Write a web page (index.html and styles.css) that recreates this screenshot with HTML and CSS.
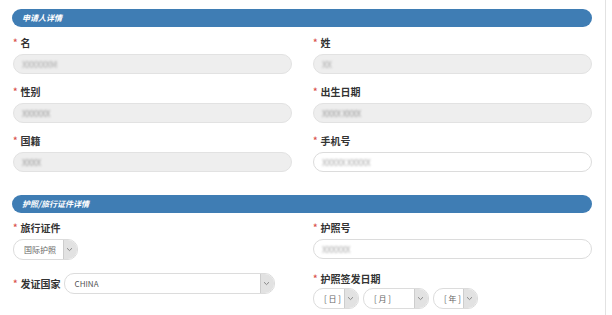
FILE: index.html
```html
<!DOCTYPE html>
<html lang="zh-CN">
<head>
    <meta charset="UTF-8">
    <meta name="viewport" content="width=device-width, initial-scale=1.0">
    <title>申请人详情</title>
    <link rel="stylesheet" href="styles.css">
</head>
<body>
    <div id="page">

        <!-- Applicant details -->
        <div class="section-bar">申请人详情</div>
        <div class="grid">
            <div class="field">
                <label><span class="req">*</span>名</label>
                <div class="input readonly"><span class="blur">XXXXXXM</span></div>
            </div>
            <div class="field">
                <label><span class="req">*</span>姓</label>
                <div class="input readonly"><span class="blur">XX</span></div>
            </div>
            <div class="field">
                <label><span class="req">*</span>性别</label>
                <div class="input readonly"><span class="blur dark">XXXXXX</span></div>
            </div>
            <div class="field">
                <label><span class="req">*</span>出生日期</label>
                <div class="input readonly"><span class="blur dark">XXXX XXXX</span></div>
            </div>
            <div class="field">
                <label><span class="req">*</span>国籍</label>
                <div class="input readonly"><span class="blur dark">XXXX</span></div>
            </div>
            <div class="field">
                <label><span class="req">*</span>手机号</label>
                <div class="input"><span class="blur">XXXXX XXXXX</span></div>
            </div>
        </div>

        <!-- Passport details -->
        <div class="section-bar second">护照/旅行证件详情</div>
        <div class="grid tight">
            <div class="field">
                <label><span class="req">*</span>旅行证件</label>
                <div class="select small">
                    <span class="value">国际护照</span>
                    <span class="arrow"><svg width="7" height="5" viewBox="0 0 7 5"><path d="M1 1.2 L3.5 3.6 L6 1.2" fill="none" stroke="#888" stroke-width="1"/></svg></span>
                </div>
            </div>
            <div class="field">
                <label><span class="req">*</span>护照号</label>
                <div class="input"><span class="blur">XXXXXX</span></div>
            </div>
            <div class="field inline">
                <label><span class="req">*</span>发证国家</label>
                <div class="select country">
                    <span class="value">CHINA</span>
                    <span class="arrow"><svg width="7" height="5" viewBox="0 0 7 5"><path d="M1 1.2 L3.5 3.6 L6 1.2" fill="none" stroke="#888" stroke-width="1"/></svg></span>
                </div>
            </div>
            <div class="field">
                <label><span class="req">*</span>护照签发日期</label>
                <div class="date-row">
                    <div class="select day">
                        <span class="value">[ 日 ]</span>
                        <span class="arrow"><svg width="7" height="5" viewBox="0 0 7 5"><path d="M1 1.2 L3.5 3.6 L6 1.2" fill="none" stroke="#888" stroke-width="1"/></svg></span>
                    </div>
                    <div class="select month">
                        <span class="value">[ 月 ]</span>
                        <span class="arrow"><svg width="7" height="5" viewBox="0 0 7 5"><path d="M1 1.2 L3.5 3.6 L6 1.2" fill="none" stroke="#888" stroke-width="1"/></svg></span>
                    </div>
                    <div class="select year">
                        <span class="value">[ 年 ]</span>
                        <span class="arrow"><svg width="7" height="5" viewBox="0 0 7 5"><path d="M1 1.2 L3.5 3.6 L6 1.2" fill="none" stroke="#888" stroke-width="1"/></svg></span>
                    </div>
                </div>
            </div>
        </div>

    </div>
</body>
</html>
```

FILE: styles.css
```css
body {
    margin: 0;
    background: #fff;
    font-family: "Noto Sans CJK SC", "Noto Sans", sans-serif;
    color: #333;
}
#page {
    width: 606px;
    height: 315px;
    border-right: 1px solid #e2e2e2;
    padding: 9px 0 0 12px;
    box-sizing: border-box;
}
.section-bar {
    width: 580px;
    height: 18px;
    line-height: 18px;
    background: #3f7db4;
    border-radius: 9px;
    color: #fff;
    font-size: 8px;
    font-weight: bold;
    font-style: italic;
    padding-left: 10px;
    box-sizing: border-box;
}
.section-bar.second { margin-top: 23px; }
.grid {
    display: grid;
    grid-template-columns: 280px 280px;
    column-gap: 20px;
    row-gap: 11px;
    margin-top: 9px;
    padding-left: 1px;
}
.grid.tight { margin-top: 8px; row-gap: 12px; }
.field label {
    display: block;
    height: 14px;
    line-height: 14px;
    font-size: 10px;
    font-weight: bold;
    color: #333;
    margin-bottom: 4px;
}
.req {
    color: #d9534f;
    font-size: 9px;
    margin-right: 3px;
    position: relative;
    top: -1px;
}
.input {
    height: 20px;
    border: 1px solid #dcdcdc;
    border-radius: 10px;
    box-sizing: border-box;
    background: #fff;
    padding-left: 8px;
    display: flex;
    align-items: center;
    width: 279px;
}
.input.readonly { background: #eeeeee; border-color: #e2e2e2; }
.blur {
    font-size: 9px;
    color: #a8a8a8;
    filter: blur(1.3px);
    letter-spacing: -0.5px;
}
.blur.dark { color: #999; }
.select {
    height: 21px;
    border: 1px solid #dcdcdc;
    border-radius: 10px;
    box-sizing: border-box;
    background: #fff;
    display: flex;
    align-items: center;
    overflow: hidden;
}
.select .value {
    flex: 1;
    font-size: 8px;
    color: #666;
    padding-left: 10px;
}
.select .arrow {
    width: 14px;
    height: 100%;
    background: #e2e2e2;
    border-left: 1px solid #cdcdcd;
    display: flex;
    align-items: center;
    justify-content: center;
    box-sizing: border-box;
    padding-right: 2px;
}
.select.small { width: 65px; }
.select.country { width: 211px; }
.select.country .value { color: #555; }
.select.day { width: 46px; }
.select.month { width: 66px; }
.select.year { width: 45px; }
.field.inline {
    display: flex;
    align-items: center;
    align-self: start;
    margin-top: 1px;
}
.field.inline label { margin: 0 3px 0 0; }
.date-row {
    display: flex;
    gap: 4px;
    margin-top: -2px;
}
```
